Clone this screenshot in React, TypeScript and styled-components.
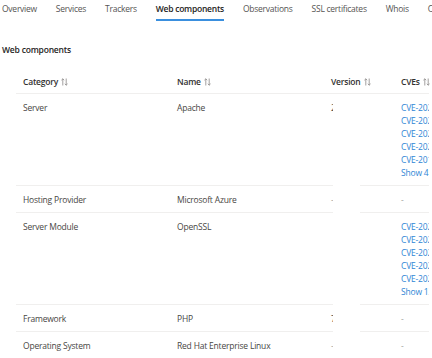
import React from 'react';
import styled, { createGlobalStyle } from 'styled-components';

const GlobalStyle = createGlobalStyle`
  html, body {
    margin: 0;
    padding: 0;
    background: #ffffff;
    overflow: hidden;
  }
  body {
    font-family: "Open Sans", "Noto Sans", "Liberation Sans", sans-serif;
    font-size: 8.5px;
    letter-spacing: -0.2px;
    color: #484644;
  }
`;

const Page = styled.div`
  width: 432px;
  padding-left: 2px;
  box-sizing: border-box;
`;

const TabBar = styled.nav`
  display: flex;
  gap: 19px;
  white-space: nowrap;
`;

const Tab = styled.div<{ $active?: boolean }>`
  padding: 3px 0 4px;
  line-height: 12px;
  letter-spacing: -0.25px;
  border-bottom: 2px solid ${(p) => (p.$active ? '#3a8fde' : 'transparent')};
  color: ${(p) => (p.$active ? '#252423' : '#555453')};
  font-weight: ${(p) => (p.$active ? 600 : 400)};
`;

const Heading = styled.h2`
  margin: 23px 0 0;
  font-size: 8.5px;
  line-height: 12px;
  font-weight: 600;
  color: #252423;
`;

const Table = styled.div`
  margin: 12px 0 0 14px;
  width: 413px;
`;

const HeadRow = styled.div`
  display: grid;
  grid-template-columns: 154px 154px 70px 1fr;
  border-bottom: 1px solid #f0efee;
`;

const HeadCell = styled.div`
  padding: 7px 7px 5px;
  line-height: 13px;
  font-weight: 600;
  color: #323130;
  display: flex;
  align-items: center;
  gap: 3px;
  white-space: nowrap;
`;

const Row = styled.div`
  display: grid;
  grid-template-columns: 154px 154px 9px 27px 34px 35px;
`;

const Cell = styled.div<{ $clip?: boolean; $bare?: boolean }>`
  padding: 7px 7px 6px;
  line-height: 13px;
  border-bottom: 1px solid ${(p) => (p.$bare ? 'transparent' : '#f0efee')};
  white-space: nowrap;
  overflow: ${(p) => (p.$clip ? 'hidden' : 'visible')};
  padding-right: ${(p) => (p.$clip ? '0' : '7px')};
`;

const Links = styled.div`
  display: flex;
  flex-direction: column;
`;

const CveLink = styled.a`
  color: #2f86d5;
  text-decoration: none;
`;

const Dash = styled.span`
  color: #a19f9d;
`;

const SortIcon = () => (
  <svg width="7" height="8" viewBox="0 0 7 8" fill="none" stroke="#8a8886" strokeWidth="0.8">
    <path d="M1.8 7.5V0.8M0.4 2.2L1.8 0.8L3.2 2.2" />
    <path d="M5.2 0.5V7.2M3.8 5.8L5.2 7.2L6.6 5.8" />
  </svg>
);

interface Component {
  category: string;
  name: string;
  version: string;
  cves: string[];
  more?: number;
}

const components: Component[] = [
  {
    category: 'Server',
    name: 'Apache',
    version: '2.4.52',
    cves: ['CVE-2022-22720', 'CVE-2022-31813', 'CVE-2022-23943', 'CVE-2022-22721', 'CVE-2017-7679'],
    more: 41,
  },
  { category: 'Hosting Provider', name: 'Microsoft Azure', version: '-', cves: [] },
  {
    category: 'Server Module',
    name: 'OpenSSL',
    version: '',
    cves: ['CVE-2023-0286', 'CVE-2022-4450', 'CVE-2023-0215', 'CVE-2022-1292', 'CVE-2022-2068'],
    more: 13,
  },
  { category: 'Framework', name: 'PHP', version: '7.4', cves: [] },
  { category: 'Operating System', name: 'Red Hat Enterprise Linux', version: '-', cves: [] },
];

const tabs = ['Overview', 'Services', 'Trackers', 'Web components', 'Observations', 'SSL certificates', 'Whois', 'Cookies'];

const App: React.FC = () => {
  return (
    <Page>
      <GlobalStyle />
      <TabBar>
        {tabs.map((t) => (
          <Tab key={t} $active={t === 'Web components'}>
            {t}
          </Tab>
        ))}
      </TabBar>
      <Heading>Web components</Heading>
      <Table>
        <HeadRow>
          <HeadCell>Category <SortIcon /></HeadCell>
          <HeadCell>Name <SortIcon /></HeadCell>
          <HeadCell>Version <SortIcon /></HeadCell>
          <HeadCell>CVEs <SortIcon /></HeadCell>
        </HeadRow>
        {components.map((c) => (
          <Row key={c.category}>
            <Cell>{c.category}</Cell>
            <Cell>{c.name}</Cell>
            <Cell $clip>{c.version === '-' ? <Dash>-</Dash> : c.version}</Cell>
            <Cell $bare />
            <Cell />
            <Cell $clip>
              {c.cves.length > 0 ? (
                <Links>
                  {c.cves.map((id) => (
                    <CveLink key={id} href="#">{id}</CveLink>
                  ))}
                  <CveLink href="#">Show {c.more} more</CveLink>
                </Links>
              ) : (
                <Dash>-</Dash>
              )}
            </Cell>
          </Row>
        ))}
      </Table>
    </Page>
  );
};

export default App;
